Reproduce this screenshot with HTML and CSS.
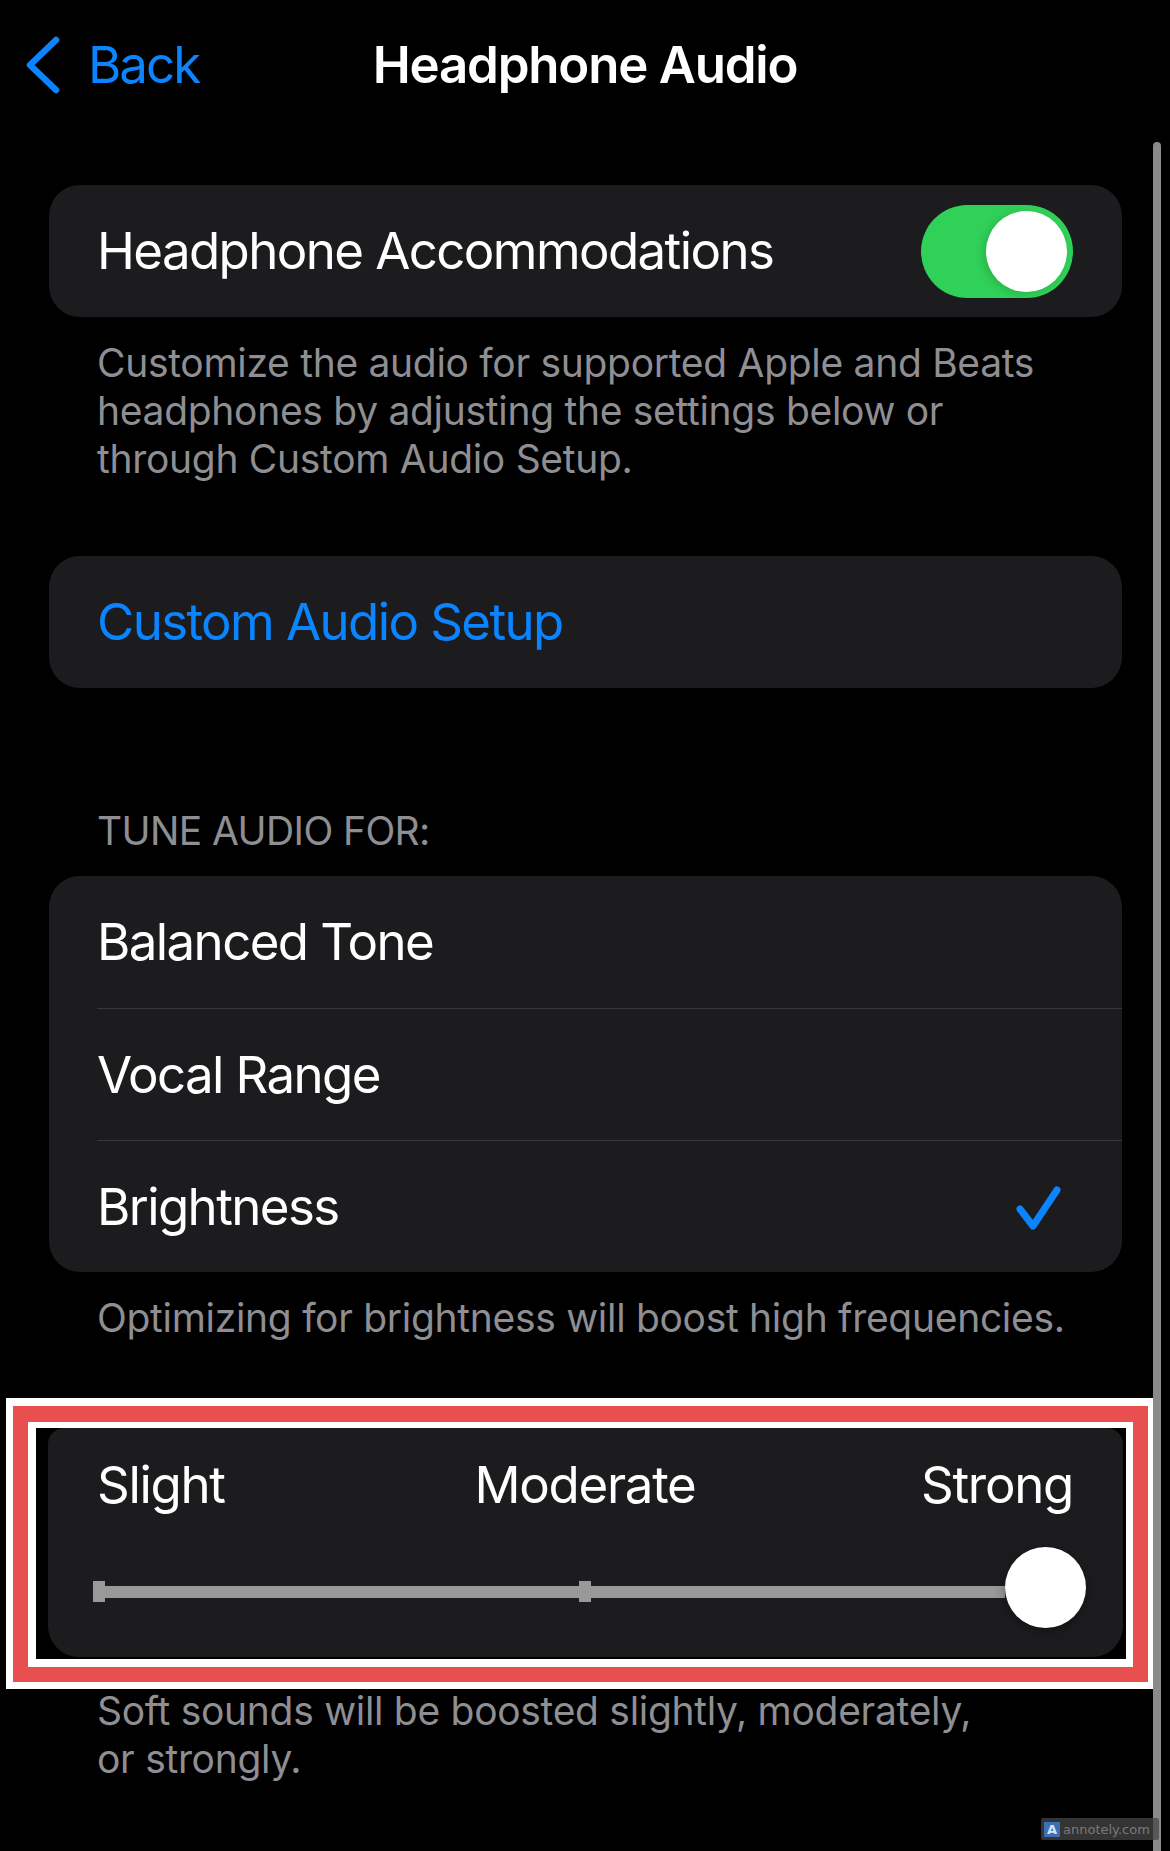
FILE: index.html
```html
<!DOCTYPE html>
<html lang="en">
<head>
<meta charset="utf-8" />
<title>Headphone Audio</title>
<link rel="stylesheet" href="styles.css">
</head>
<body>

<div class="screen">
    <div class="nav">
        <a class="back" href="#">
            <svg class="chevron" width="40" height="60" viewBox="0 0 40 60">
                <path d="M33 5 L7 30 L33 55" fill="none" stroke="#0a84ff" stroke-width="6.5" stroke-linecap="round" stroke-linejoin="round" />
            </svg>
            <span>Back</span>
        </a>
        <h1>Headphone Audio</h1>
        <span></span>
    </div>

    <div class="group">
        <div class="row">
            <span class="label">Headphone Accommodations</span>
            <span class="switch on"><span class="knob"></span></span>
        </div>
    </div>
    <p class="footer">Customize the audio for supported Apple and Beats<br>headphones by adjusting the settings below or<br>through Custom Audio Setup.</p>

    <div class="group group-link">
        <div class="row">
            <span class="label link">Custom Audio Setup</span>
        </div>
    </div>

    <h2 class="header">TUNE AUDIO FOR:</h2>
    <div class="group">
        <div class="row option">
            <span class="label">Balanced Tone</span>
        </div>
        <div class="row option sep">
            <span class="label">Vocal Range</span>
        </div>
        <div class="row option sep">
            <span class="label">Brightness</span>
            <svg class="check" width="50" height="50" viewBox="0 0 50 50">
                <path d="M9 27 L22 44 L46 8" fill="none" stroke="#0a84ff" stroke-width="7" stroke-linecap="round" stroke-linejoin="round" />
            </svg>
        </div>
    </div>
    <p class="footer">Optimizing for brightness will boost high frequencies.</p>

    <div class="mark">
        <div class="mark-red">
            <div class="mark-inner">
                <div class="slider-card">
                    <div class="levels">
                        <span class="lvl-left">Slight</span>
                        <span class="lvl-mid">Moderate</span>
                        <span class="lvl-right">Strong</span>
                    </div>
                    <div class="slider">
                        <span class="tick"></span>
                        <span class="bar bar-first"></span>
                        <span class="tick"></span>
                        <span class="bar bar-rest"></span>
                        <span class="thumb"></span>
                    </div>
                </div>
            </div>
        </div>
    </div>
    <p class="footer footer-last">Soft sounds will be boosted slightly, moderately,<br>or strongly.</p>

    <div class="scrollbar"></div>
    <div class="watermark">
        <span class="wm-logo">A</span>
        <span class="wm-text">annotely.com</span>
    </div>
</div>

</body>
</html>
```

FILE: styles.css
```css
html, body {
    margin: 0;
    background: #000;
}

body {
    font-family: Inter, "Noto Sans", sans-serif;
    color: #fff;
    -webkit-font-smoothing: antialiased;
}

.screen {
    position: relative;
    width: 1170px;
    height: 1851px;
    overflow: hidden;
}

/* nav bar */

.nav {
    display: grid;
    grid-template-columns: 1fr auto 1fr;
    align-items: center;
    height: 130px;
}

.back {
    display: flex;
    align-items: center;
    padding-left: 23px;
    color: #0a84ff;
    text-decoration: none;
    font-size: 51px;
    line-height: 60px;
    letter-spacing: -2px;
}

.chevron {
    margin-right: 25px;
}

.nav h1 {
    margin: 0;
    font-size: 51px;
    line-height: 60px;
    font-weight: 600;
    letter-spacing: -1.2px;
}

/* grouped list */

.group {
    margin: 55px 48px 0 49px;
    background: #1c1c1e;
    border-radius: 31px;
    overflow: hidden;
}

.group-link {
    margin-top: 73px;
}

.row {
    display: flex;
    align-items: center;
    justify-content: space-between;
    height: 132px;
    box-sizing: border-box;
    margin-left: 48px;
    padding-right: 49px;
}

.row.sep {
    border-top: 1px solid #38383a;
}

.option {
    padding-right: 61px;
}

.label {
    font-size: 51px;
    line-height: 60px;
    letter-spacing: -1.6px;
}

.link {
    color: #0a84ff;
}

.switch {
    display: flex;
    align-items: center;
    justify-content: flex-end;
    width: 152px;
    height: 93px;
    padding: 0 6px;
    box-sizing: border-box;
    border-radius: 47px;
    background: #30d158;
}

.knob {
    width: 81px;
    height: 81px;
    border-radius: 50%;
    background: #fff;
    box-shadow: -3px 2px 8px rgba(0, 0, 0, 0.15);
}

.footer {
    margin: 22px 40px 0 97px;
    font-size: 39px;
    line-height: 48px;
    color: #8e8e93;
    letter-spacing: -0.3px;
}

.header {
    margin: 119px 0 21px 97px;
    font-size: 39px;
    line-height: 48px;
    font-weight: 400;
    color: #8e8e93;
    letter-spacing: -0.6px;
}

.header + .group {
    margin-top: 0;
}

/* annotation frame round the slider */

.mark {
    margin: 56px 15px 0 6px;
    border: 7px solid #fff;
    border-top-width: 8px;
}

.mark-red {
    border: 15px solid #ea4f4f;
    border-top-width: 16px;
}

.mark-inner {
    border: 7px solid #fff;
    border-top-width: 6px;
    border-left-width: 8px;
    border-bottom-width: 8px;
    background: #000;
    height: 230px;
    padding: 0 3px 1px 12px;
}

.slider-card {
    height: 229px;
    background: #1c1c1e;
    border-radius: 16px 16px 31px 31px;
    padding-top: 27px;
    box-sizing: border-box;
}

.levels {
    display: grid;
    grid-template-columns: 1fr auto 1fr;
    margin: 0 50px 0 49px;
    font-size: 51px;
    line-height: 60px;
    letter-spacing: -1.3px;
}

.lvl-right {
    justify-self: end;
}

.slider {
    display: flex;
    align-items: center;
    height: 81px;
    margin: 36px 37px 0 45px;
}

.tick {
    width: 12px;
    height: 21px;
    background: #999;
    flex: none;
}

.bar {
    height: 12px;
    background: #999;
}

.bar-first {
    width: 474px;
    flex: none;
}

.bar-rest {
    flex: 1;
}

.thumb {
    flex: none;
    width: 81px;
    height: 81px;
    margin-top: -8px;
    border-radius: 50%;
    background: #fff;
    box-shadow: 0 3px 12px rgba(0, 0, 0, 0.35);
}

.footer-last {
    margin-top: -2px;
}

/* overlays */

.scrollbar {
    position: absolute;
    left: 1153px;
    top: 142px;
    width: 8px;
    bottom: -10px;
    border-radius: 4px;
    background: #8a8a8a;
}

.watermark {
    position: absolute;
    left: 1041px;
    top: 1818px;
    width: 118px;
    height: 22px;
    display: flex;
    align-items: center;
    gap: 3px;
    padding-left: 3px;
    box-sizing: border-box;
    background: rgba(70, 70, 70, 0.75);
    border-radius: 2px;
}

.wm-logo {
    width: 16px;
    height: 15px;
    background: #3b6fb6;
    color: #d8e2f0;
    font-family: "DejaVu Sans", sans-serif;
    font-size: 13px;
    line-height: 15px;
    text-align: center;
    font-weight: bold;
}

.wm-text {
    font-family: "DejaVu Sans", sans-serif;
    font-size: 13px;
    color: #7a7a7a;
}
```
